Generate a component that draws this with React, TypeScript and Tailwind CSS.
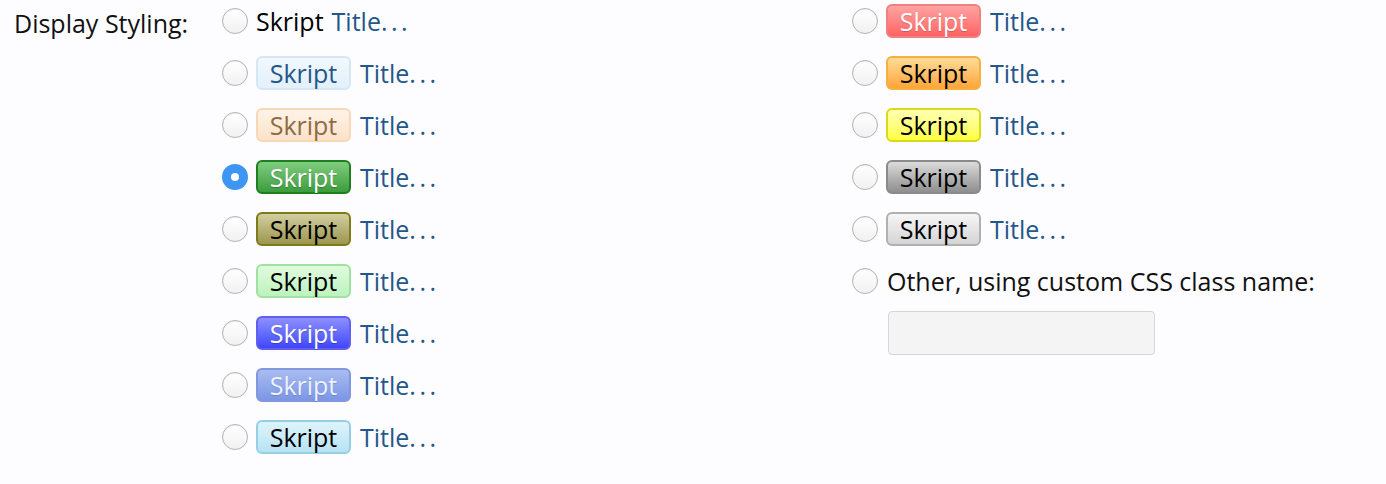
import React from "react";

type Badge = { cls: string } | null;

const left: Badge[] = [
  null,
  { cls: "bg-linear-to-b from-[#f2f8fd] to-[#e3f0fa] border-[#d5e6f4] text-[#24578a]" },
  { cls: "bg-linear-to-b from-[#fef3e8] to-[#fbe2c9] border-[#f8d7b6] text-[#8f6a45]" },
  { cls: "bg-linear-to-b from-[#7fcd7f] to-[#3c9c3c] border-[#1d7f1d] text-white [text-shadow:0_1px_1px_rgba(0,0,0,0.25)]" },
  { cls: "bg-linear-to-b from-[#d2cfa0] to-[#9c964f] border-[#7f7a18] text-black" },
  { cls: "bg-linear-to-b from-[#e0fbe0] to-[#bdf2bd] border-[#9fe29f] text-black" },
  { cls: "bg-linear-to-b from-[#8e8eff] to-[#4343fb] border-[#6060f0] text-white [text-shadow:0_1px_1px_rgba(0,0,0,0.25)]" },
  { cls: "bg-linear-to-b from-[#a9bcf2] to-[#7c96e4] border-[#8198df] text-[#eef2ff] [text-shadow:0_1px_1px_rgba(0,0,0,0.15)]" },
  { cls: "bg-linear-to-b from-[#def4fb] to-[#b7e3f3] border-[#95cfe4] text-black" },
];

const right: Badge[] = [
  { cls: "bg-linear-to-b from-[#ffa3a3] to-[#ff6262] border-[#f08080] text-white [text-shadow:0_1px_1px_rgba(0,0,0,0.2)]" },
  { cls: "bg-linear-to-b from-[#ffdc95] to-[#ffa536] border-[#f4b040] text-black" },
  { cls: "bg-linear-to-b from-[#ffffb0] to-[#ffff3a] border-[#dada1a] text-black" },
  { cls: "bg-linear-to-b from-[#dcdcdc] to-[#8f8f8f] border-[#8a8a8a] text-black" },
  { cls: "bg-linear-to-b from-[#f6f6f6] to-[#d4d4d4] border-[#b0b0b0] text-black" },
];

function Radio({ checked }: { checked?: boolean }) {
  if (checked) {
    return (
      <span className="flex h-[26px] w-[26px] shrink-0 items-center justify-center rounded-full bg-[#3d95f4]">
        <span className="h-[8px] w-[8px] rounded-full bg-white" />
      </span>
    );
  }
  return (
    <span className="h-[26px] w-[26px] shrink-0 rounded-full border border-[#b3b3b3] bg-linear-to-b from-[#ffffff] to-[#f1f1f1] shadow-[inset_0_1px_1px_rgba(0,0,0,0.06)]" />
  );
}

function Title() {
  return (
    <span className="text-[#24578a]">
      Title<span className="tracking-[3.5px]">...</span>
    </span>
  );
}

function Row({ badge, checked }: { badge: Badge; checked?: boolean }) {
  return (
    <div className="flex h-[36px] items-center">
      <Radio checked={checked} />
      {badge ? (
        <>
          <span
            className={`ml-[8px] mr-[9px] flex h-[34px] w-[95px] items-center justify-center rounded-[6px] border-2 ${badge.cls}`}
          >
            Skript
          </span>
          <Title />
        </>
      ) : (
        <>
          <span className="ml-[8px] mr-[8px] text-black">Skript</span>
          <Title />
        </>
      )}
    </div>
  );
}

export default function App() {
  return (
    <div
      className="flex h-[484px] w-[1386px] bg-[#fdfcfe] pl-[14px] pt-[3px] text-[25px] leading-none text-[#111]"
      style={{ fontFamily: '"Open Sans", "Noto Sans", sans-serif' }}
    >
      <div className="w-[208px] pt-[2px]">
        <div className="flex h-[36px] items-center">Display Styling:</div>
      </div>
      <div className="flex w-[630px] flex-col gap-[16px]">
        {left.map((b, i) => (
          <Row key={i} badge={b} checked={i === 3} />
        ))}
      </div>
      <div className="flex flex-col gap-[16px]">
        {right.map((b, i) => (
          <Row key={i} badge={b} />
        ))}
        <div className="flex flex-col">
          <div className="flex h-[36px] items-center">
            <Radio />
            <span className="ml-[9px]">Other, using custom CSS class name:</span>
          </div>
          <input
            type="text"
            className="ml-[36px] mt-[12px] h-[44px] w-[267px] rounded-[4px] border border-[#d6d6d6] bg-[#f4f4f4] outline-none"
          />
        </div>
      </div>
    </div>
  );
}
